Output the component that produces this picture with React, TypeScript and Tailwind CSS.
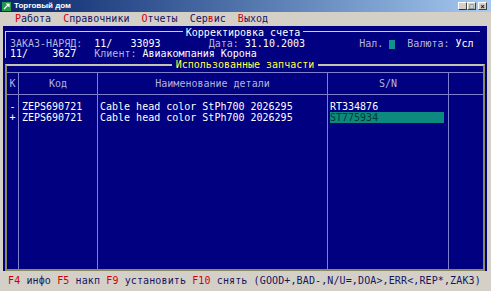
import React from 'react';

const LBL = 'text-[#b4b4dc]';
const VAL = 'text-white';

const WinButton: React.FC<{ children: React.ReactNode; className?: string }> = ({ children, className = '' }) => (
  <div
    className={`w-[9px] h-[8px] bg-[#d4d0c8] border border-t-white border-l-white border-r-[#404040] border-b-[#404040] flex items-center justify-center text-[7px] leading-none text-black font-['Liberation_Sans',sans-serif] font-bold ${className}`}
  >
    {children}
  </div>
);

const Column: React.FC<{
  width: string;
  title: string;
  rows: React.ReactNode[];
  last?: boolean;
  cellClass?: string;
}> = ({ width, title, rows, last, cellClass = '' }) => (
  <div className={`${width} flex flex-col ${last ? '' : 'border-r border-[#8080d0]'}`}>
    <div className={`h-[23px] border-y border-[#8080d0] flex items-center justify-center ${LBL}`}>{title}</div>
    <div className="pt-[6px]">
      {rows.map((r, i) => (
        <div key={i} className={`h-[11px] leading-[11px] whitespace-pre ${cellClass}`}>
          {r}
        </div>
      ))}
    </div>
  </div>
);

const App: React.FC = () => {
  return (
    <div className="w-[491px] h-[291px] bg-[#d4d0c8] flex flex-col overflow-hidden">
      {/* Title bar */}
      <div className="h-[12px] bg-linear-to-r from-[#0a246a] to-[#a6caf0] flex items-center pl-[2px] pr-[4px]">
        <div className="w-[9px] h-[9px] bg-[#1f9a4a] flex items-center justify-center">
          <svg width="7" height="7" viewBox="0 0 7 7">
            <path d="M1 6 L6 1 M3 1 H6 V4" stroke="white" strokeWidth="1.2" fill="none" />
          </svg>
        </div>
        <span className="ml-[3px] text-[8px] leading-none font-bold text-white font-['Liberation_Sans',sans-serif]">
          Торговый дом
        </span>
        <div className="ml-auto flex items-center">
          <WinButton>_</WinButton>
          <WinButton>□</WinButton>
          <WinButton className="ml-[2px]">×</WinButton>
        </div>
      </div>

      {/* Menu */}
      <div className="h-[14px] flex items-center pl-[15px] text-[10px] leading-none text-[#14145e] font-['DejaVu_Sans_Mono',monospace] whitespace-pre">
        <span className="text-[#d00000]">Р</span>абота  <span className="text-[#d00000]">С</span>правочники  <span className="text-[#d00000]">О</span>тчеты  Сер<span className="text-[#d00000]">в</span>ис  <span className="text-[#d00000]">В</span>ыход
      </div>

      {/* Console */}
      <div className="mx-[3px] w-[484px] flex-1 bg-[#000080] flex flex-col pt-[1px] pl-[2px] pr-[2px] text-[10px] font-['DejaVu_Sans_Mono',monospace] text-white">
        {/* Header box */}
        <div className="flex h-[11px] w-[475px]">
          <div className="flex-1 mt-[4px] border-t border-l border-[#d0d0d0]" />
          <span className="px-[3px] leading-[11px] whitespace-pre">Корректировка счета</span>
          <div className="flex-1 mt-[4px] border-t border-[#d0d0d0]" />
        </div>
        <div className="border-l border-[#d0d0d0] pl-[4px] h-[20px]">
          <div className="leading-[11px] whitespace-pre -mb-[1px]">
            <span className={LBL}>ЗАКАЗ-НАРЯД:</span>
            <span className={VAL}>  11/   33093        </span>
            <span className={LBL}>Дата: </span>
            <span className={VAL}>31.10.2003         </span>
            <span className={LBL}>Нал. </span>
            <span className="inline-block w-[6px] h-[9px] align-middle bg-[#139090]" />
            <span className={LBL}>  Валюта: </span>
            <span className={VAL}>Усл</span>
          </div>
          <div className="leading-[11px] whitespace-pre">
            <span className={VAL}>11/    3627   </span>
            <span className={LBL}>Клиент: </span>
            <span className={VAL}>Авиакомпания Корона</span>
          </div>
        </div>

        {/* Parts box */}
        <div className="flex h-[10px] mt-[2px]">
          <div className="flex-1 mt-[4px] border-t-2 border-l-2 border-t-[#c4c4b0] border-l-[#8c8c5c]" />
          <span className="px-[4px] leading-[10px] text-[#ffff4a] whitespace-pre">Использованные запчасти</span>
          <div className="flex-1 mt-[4px] border-t-2 border-r-2 border-t-[#c4c4b0] border-r-[#8c8c5c]" />
        </div>
        <div className="flex-1 border-x-2 border-b-2 border-[#8c8c5c] pt-[2px] flex">
          <Column width="w-[12px]" title="К" rows={['-', '+']} cellClass="text-center" />
          <Column width="w-[79px]" title="Код" rows={['ZEPS690721', 'ZEPS690721']} cellClass="pl-[3px]" />
          <Column
            width="w-[230px]"
            title="Наименование детали"
            rows={['Cable head color StPh700 2026295', 'Cable head color StPh700 2026295']}
            cellClass="pl-[2px]"
          />
          <Column
            width="w-[121px]"
            title="S/N"
            rows={[
              <span className="pl-[2px]">RT334876</span>,
              <span className="block ml-[2px] mr-[4px] bg-[#0c8a80] text-[#063a30]">ST775934</span>,
            ]}
          />
          <Column width="flex-1" title="" rows={[]} last />
        </div>
      </div>

      {/* Status bar */}
      <div className="h-[20px] flex items-center pl-[8px] text-[10px] tracking-[0.12px] leading-none text-[#14145e] font-['DejaVu_Sans_Mono',monospace] whitespace-pre">
        <span className="text-[#d00000]">F4</span> инфо <span className="text-[#d00000]">F5</span> накп{' '}
        <span className="text-[#d00000]">F9</span> установить <span className="text-[#d00000]">F10</span> снять
        (GOOD+,BAD-,N/U=,DOA&gt;,ERR&lt;,REP*,ZAK3)
      </div>
    </div>
  );
};

export default App;
